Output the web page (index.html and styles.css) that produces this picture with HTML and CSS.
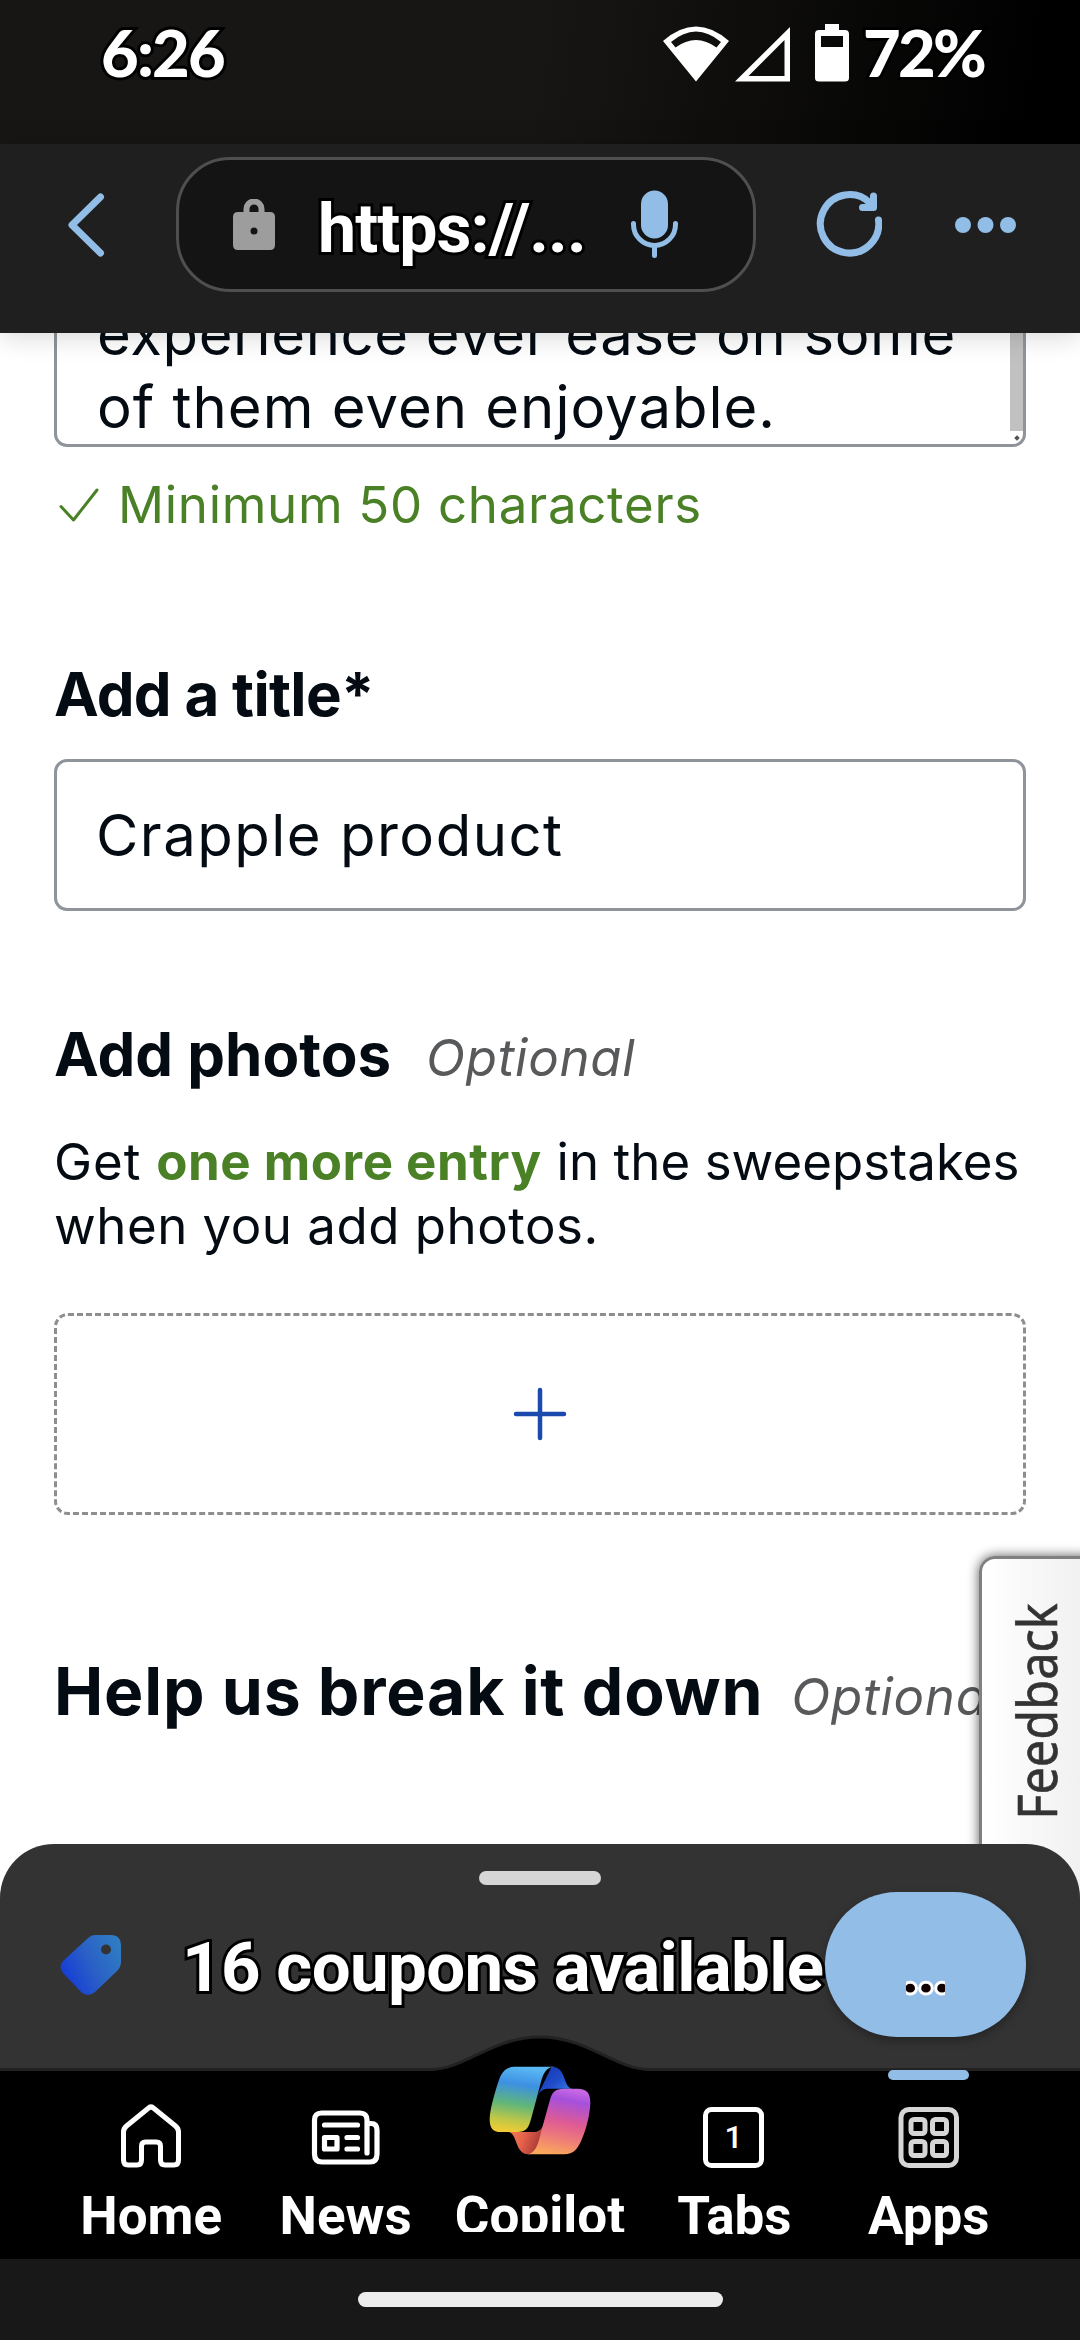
FILE: index.html
```html
<!DOCTYPE html>
<html lang="en">
<head>
<meta charset="utf-8">
<title>Write a review</title>
<link rel="stylesheet" href="styles.css">
</head>
<body>
<div class="phone">
  <header class="status">
    <span class="clock outlined">6:26</span>
    <svg class="status-icons" viewBox="663 24 187 58" width="187" height="58" fill="#fff">
      <path fill-rule="evenodd" d="M663 41Q696 12 729 41L696 81.500ZM671 42Q696 21 721 42L716.500 47.500Q696 32.500 675.500 47.500Z"/>
      <path fill-rule="evenodd" d="M790 27V81.500H735ZM784.500 40V76H748.500Z"/>
      <path fill-rule="evenodd" d="M825 24H839V30H845Q849 30 849 34V78Q849 81.500 845 81.500H819Q815 81.500 815 78V34Q815 30 819 30H825ZM821 36V47H843V36Z"/>
    </svg>
    <span class="battery outlined">72%</span>
  </header>

  <div class="toolbar">
    <svg class="back" viewBox="66 189 40 72" width="40" height="72" fill="none" stroke="#91bde7" stroke-width="7" stroke-linecap="round" stroke-linejoin="round"><path d="M100.500 197L72 225L100.500 253"/></svg>
    <div class="address">
      <svg viewBox="233 198 42 52" width="42" height="52"><path d="M246.500 213V208a7.500 7.500 0 0 1 15 0V213" fill="none" stroke="#9d9d9d" stroke-width="6"/><path fill="#9d9d9d" fill-rule="evenodd" d="M238 211H270Q275 211 275 216V244Q275 249 270 249H238Q233 249 233 244V216Q233 211 238 211ZM254 226.500a3.500 3.500 0 1 0 0 7a3.500 3.500 0 1 0 0-7Z"/></svg>
      <span class="url outlined">https://...</span>
      <svg viewBox="630 190 50 70" width="50" height="70"><rect x="641" y="190.500" width="27" height="48" rx="13.500" fill="#91bde7"/><path d="M633.500 223.500v1a21 21 0 0 0 42 0v-1M654.500 246v9.500" fill="none" stroke="#91bde7" stroke-width="5" stroke-linecap="round"/></svg>
    </div>
    <svg class="reload" viewBox="816 190 66 68" width="66" height="68" fill="none" stroke="#91bde7" stroke-width="7" stroke-linecap="round" stroke-linejoin="round"><path d="M878.500 220A29.200 29.200 0 1 1 870 203"/><path d="M873.500 196V207.500H862.500"/></svg>
    <svg class="more" viewBox="954 217 64 18" width="64" height="18" fill="#91bde7"><circle cx="963" cy="226" r="8"/><circle cx="985.500" cy="226" r="8"/><circle cx="1008" cy="226" r="8"/></svg>
  </div>

  <main class="page">
    <div class="textarea">
      <p class="line-one">experience ever ease on some</p>
      <p class="line-two">of them even enjoyable.</p>
      <i class="scrollbar"></i><i class="grip"></i>
    </div>
    <p class="hint">
      <svg viewBox="0 0 40 34" width="40" height="34" fill="none" stroke="#4a8026" stroke-width="3" stroke-linecap="round" stroke-linejoin="round"><path d="M2 18.500L14.500 32L38 2"/></svg>
      <span>Minimum 50 characters</span>
    </p>
    <h2 class="label title-label">Add a title*</h2>
    <div class="input">Crapple product</div>
    <div class="heading photos"><h2 class="label">Add photos</h2><em>Optional</em></div>
    <p class="copy"><span class="get">Get</span> <b>one more entry</b> <span class="tight">in the sweepstakes</span><br>when you add photos.</p>
    <div class="drop"><svg viewBox="0 0 54 54" width="54" height="54" stroke="#1b49ae" stroke-width="4.500" stroke-linecap="round"><path d="M3 27H51M27 3V51"/></svg></div>
    <div class="heading breakdown"><h1>Help us break it down</h1><em>Optional</em></div>
    <div class="feedback"><span>Feedback</span></div>
  </main>

  <section class="coupons">
    <i class="handle"></i>
    <div class="coupon-row">
      <svg class="tag" viewBox="60 1933 62 62" width="62" height="62"><defs><linearGradient id="tg" x1="0" y1=".75" x2="1" y2=".25"><stop offset="0" stop-color="#1238d8"/><stop offset=".5" stop-color="#2a5fc6"/><stop offset="1" stop-color="#2f7cc3"/></linearGradient></defs><path fill="url(#tg)" fill-rule="evenodd" d="M95 1934H111Q121 1934 121 1945V1961Q121 1966 117 1970L95 1991Q88 1997 81 1991L63 1972Q58 1966 63 1960L87 1938Q91 1934 95 1934ZM106 1943.500a5 5 0 1 0 0 10a5 5 0 1 0 0-10Z"/></svg>
      <span class="coupon-text outlined">16 coupons available</span>
      <div class="coupon-button"><span>...</span></div>
    </div>
  </section>

  <nav class="nav">
    <svg class="hump" viewBox="0 0 1080 40" width="1080" height="40"><path d="M0 34.500H430C465 34.500 492 2 540 2S615 34.500 650 34.500H1080V40H0Z" fill="#000"/><path d="M0 34.500H430C465 34.500 492 2 540 2S615 34.500 650 34.500H1080" fill="none" stroke="#222" stroke-width="3"/></svg>
    <i class="indicator"></i>
    <a class="item"><svg viewBox="0 0 72 72" width="72" height="72" fill="none" stroke="#fff" stroke-width="5" stroke-linejoin="round"><path d="M33 7.500Q36 4.500 39 7.500L60.500 25Q63.500 27.500 63.500 31V59Q63.500 64 59 64H50Q45.500 64 45.500 59V45Q45.500 41 41.500 41H30.500Q26.500 41 26.500 45V59Q26.500 64 22 64H13Q8.500 64 8.500 59V31Q8.500 27.500 11.500 25Z"/></svg><span>Home</span></a>
    <a class="item"><svg viewBox="0 0 72 72" width="72" height="72" fill="none" stroke="#fff" stroke-width="5.200" stroke-linecap="round" stroke-linejoin="round"><path d="M57 52V19Q57 12 50 12H11.500Q4.500 12 4.500 19V53Q4.500 61 12 61H60Q67 61 67 53V29Q67 22.500 61 22.500H58M14.500 24H47.500M37 36.500H47.500M37 48H47.500M14.500 36.500H27V48H14.500Z"/></svg><span>News</span></a>
    <a class="item copilot">
      <svg viewBox="176 136 308 268" width="102" height="89">
        <defs>
          <linearGradient id="a" x1=".5" y1="0" x2=".35" y2="1"><stop offset="0" stop-color="#5ab9f4"/><stop offset=".27" stop-color="#3d90e2"/><stop offset=".58" stop-color="#61b678"/><stop offset=".82" stop-color="#bdc748"/><stop offset="1" stop-color="#f0cb35"/></linearGradient>
          <linearGradient id="b" x1="0" y1="0" x2="1" y2="1"><stop offset="0" stop-color="#1537b0"/><stop offset=".5" stop-color="#1f4ac8"/><stop offset="1" stop-color="#3b87f0"/></linearGradient>
          <linearGradient id="c" x1=".6" y1="0" x2=".4" y2="1"><stop offset="0" stop-color="#c767e4"/><stop offset=".16" stop-color="#a550dc"/><stop offset=".5" stop-color="#df5b94"/><stop offset=".75" stop-color="#ee7d78"/><stop offset="1" stop-color="#fba85b"/></linearGradient>
          <linearGradient id="d" x1="0" y1="0" x2="1" y2=".3"><stop offset="0" stop-color="#f5814d"/><stop offset=".5" stop-color="#e6624c"/><stop offset="1" stop-color="#a93a36"/></linearGradient>
        </defs>
        <path fill="url(#d)" d="M235 335C262 338 254 402 294 402C325 402 332 355 340 315Q332 335 310 335Z"/>
        <path fill="url(#b)" d="M365 138C412 138 398 202 428 204H352Q332 205 322 226Z"/>
        <path fill="url(#a)" d="M258 138H375C338 138 336 178 324 218L303 296C295 325 288 335 262 335H212C186 335 178 322 178 294C180 262 193 218 204 184C215 150 228 138 258 138Z"/>
        <path fill="url(#c)" d="M402 204H444C472 204 482 218 482 248C480 290 468 330 455 360C443 388 430 402 404 402H288C320 402 326 362 336 324L360 238C366 214 376 204 402 204Z"/>
      </svg>
      <span>Copilot</span>
    </a>
    <a class="item"><svg viewBox="0 0 72 72" width="72" height="72"><rect x="7.500" y="8.500" width="56" height="56" rx="6" fill="none" stroke="#fff" stroke-width="5"/><text x="35.500" y="47" class="tab-count" text-anchor="middle">1</text></svg><span>Tabs</span></a>
    <a class="item"><svg viewBox="0 0 72 72" width="72" height="72" fill="none" stroke="#d6d6d6" stroke-width="5"><rect x="8" y="8.500" width="55.500" height="56" rx="8"/><rect x="18" y="18.500" width="14" height="14" rx="3"/><rect x="39.500" y="18.500" width="14" height="14" rx="3"/><rect x="18" y="40.500" width="14" height="14" rx="3"/><rect x="39.500" y="40.500" width="14" height="14" rx="3"/></svg><span>Apps</span></a>
  </nav>
  <footer class="gesture"><i></i></footer>
</div>
</body>
</html>
```
FILE: styles.css
```css
* { box-sizing: border-box; margin: 0; padding: 0; }
body { width: 1080px; height: 2340px; overflow: hidden; background: #000; }
svg { display: block; flex: none; }
i { font-style: normal; }

.phone { display: flex; flex-direction: column; width: 1080px; height: 2340px; }
.outlined { color: #fff; -webkit-text-stroke: 6px #000; paint-order: stroke fill; white-space: pre; }

/* Status bar */
.status { flex: none; height: 144px; display: flex; align-items: flex-start; padding: 16px 0 0 101px; background: linear-gradient(97deg, #171614 50%, #000 96%); font: 900 65px/72px Lato, sans-serif; }
.clock { width: 562px; letter-spacing: -1.8px; }
.status-icons { margin-top: 8px; }
.battery { margin-left: 13px; letter-spacing: -2.7px; }

/* Browser toolbar */
.toolbar { flex: none; height: 189px; display: flex; align-items: center; padding: 0 62px 0 66px; background: #1f1f1f; position: relative; z-index: 2; box-shadow: 0 2px 26px rgba(0,0,0,.18); }
.back { margin-right: 70px; margin-top: -27px; }
.address { width: 580px; height: 135px; margin-top: -28px; border: 3px solid #4f4f4f; border-radius: 54px; background: #141414; display: flex; align-items: center; padding: 0 73px 0 54px; }
.url { font: 700 68px/80px Roboto, sans-serif; letter-spacing: -.95px; margin: 8px auto 0 43px; }
.reload { margin: -29px 72px 0 60px; }
.more { margin-top: -27px; }

/* Web page */
.page { flex: none; position: relative; height: 1571px; padding: 0 54px; background: #fff; overflow: hidden; color: #040b12; font: 400 51px/64px Inter, sans-serif; letter-spacing: .7px; }
.textarea { position: relative; height: 114px; border: 3px solid #8f949b; border-top: 0; border-radius: 0 0 13px 13px; overflow: hidden; display: flex; flex-direction: column; justify-content: flex-end; padding-left: 40px; font-size: 58px; line-height: 73px; white-space: nowrap; }
.textarea p { flex: none; }
.line-one { letter-spacing: .65px; }
.line-two { letter-spacing: 1px; }
.scrollbar { position: absolute; right: 0; top: 0; width: 13px; height: 98px; background: #c1c1c1; }
.grip { position: absolute; right: 4px; bottom: 4px; width: 4px; height: 4px; background: #555; transform: rotate(45deg); }
.hint { display: flex; align-items: center; gap: 19px; margin-top: 26px; padding-left: 5px; color: #4a8026; }
.label { font-size: 60px; line-height: 72px; font-weight: 700; letter-spacing: 0; }
.title-label { margin-top: 121px; letter-spacing: -.7px; }
.input { height: 152px; margin-top: 29px; border: 3px solid #8f949b; border-radius: 13px; display: flex; align-items: center; padding-left: 39px; font-size: 58px; letter-spacing: 1.5px; }
.heading { display: flex; align-items: baseline; white-space: nowrap; }
.heading em { color: #58595b; letter-spacing: .7px; }
.photos { margin-top: 107px; gap: 35px; }
.copy { margin-top: 40px; letter-spacing: .5px; white-space: nowrap; }
.copy b { font-weight: 700; letter-spacing: .5px; color: #4a8026; }
.get { letter-spacing: 1px; }
.tight { letter-spacing: .05px; }
.drop { height: 202px; margin-top: 55px; border: 3px dashed #8e8e8e; border-radius: 14px; display: flex; align-items: center; justify-content: center; }
.breakdown { margin-top: 136px; gap: 28px; }
h1 { font-size: 66px; line-height: 80px; font-weight: 700; letter-spacing: .8px; }
.feedback { position: absolute; left: 979px; top: 1223px; width: 120px; height: 400px; border: 3px solid #808080; border-radius: 16px; background: linear-gradient(90deg, #fff, #f1f1f1 85%); box-shadow: 0 0 12px rgba(0,0,0,.65); display: flex; justify-content: flex-start; padding: 29px 0 0 22px; }
.feedback span { writing-mode: vertical-rl; transform: rotate(180deg) scaleY(.885); transform-origin: 50% 50%; height: 246px; font: 400 55px/64px "Noto Sans", sans-serif; letter-spacing: 0; color: #333; -webkit-text-stroke: .6px #333; }

/* Coupon sheet */
.coupons { flex: none; position: relative; height: 227px; margin-top: -60px; border-radius: 54px 54px 0 0; background: #333; padding: 27px 54px 0; display: flex; flex-direction: column; align-items: center; }
.handle { flex: none; width: 122px; height: 14px; border-radius: 7px; background: #d6d6d6; }
.coupon-row { display: flex; align-items: center; width: 100%; margin-top: 7px; padding-left: 6px; }
.coupon-text { flex: 1; margin-left: 60px; padding-top: 6px; font: 700 69px/80px Roboto, sans-serif; letter-spacing: -.65px; }
.coupon-button { position: relative; width: 201px; height: 145px; border-radius: 72px; background: #91bde7; box-shadow: 0 4px 10px rgba(0,0,0,.3); display: flex; justify-content: center; }
.coupon-button span { width: 39px; height: 80px; margin-top: 40px; overflow: hidden; display: flex; justify-content: center; font: 700 60px/80px Roboto, sans-serif; color: #100; letter-spacing: -1.5px; -webkit-text-stroke: 6px #fff; paint-order: stroke fill; }

/* Bottom navigation */
.nav { flex: none; position: relative; height: 188px; display: grid; grid-template-columns: repeat(5, 1fr); padding: 0 54px; background: #000; }
.hump { position: absolute; left: 0; top: -36px; }
.indicator { position: absolute; left: 888px; top: -1px; width: 81px; height: 10px; border-radius: 5px; background: #91bde7; }
.item { position: relative; display: flex; flex-direction: column; align-items: center; padding-top: 30px; font: 700 53px/60px Roboto, sans-serif; color: #fff; }
.item span { margin-top: 13px; }
.copilot { padding-top: 0; }
.copilot svg { margin-top: -5px; }
.copilot span { margin-top: 31px; height: 46px; overflow: hidden; }
.tab-count { font: 500 32px Roboto, sans-serif; fill: #fff; }

/* System gesture bar */
.gesture { flex: none; height: 81px; background: #181818; display: flex; justify-content: center; padding-top: 33px; }
.gesture i { width: 365px; height: 15px; border-radius: 8px; background: #ececec; }
```
